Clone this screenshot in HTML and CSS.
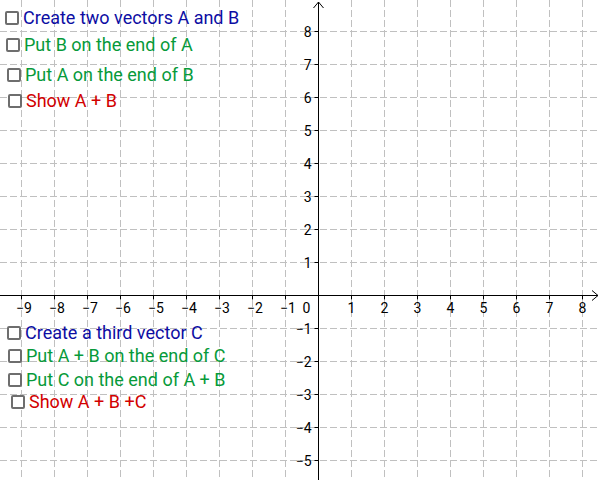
FILE: index.html
```html
<!DOCTYPE html>
<html>
<head>
<meta charset="utf-8">
<link rel="stylesheet" href="styles.css">
</head>
<body>
<div class="applet">
  <svg class="graph" width="600" height="480" viewBox="0 0 600 480">
    <g class="grid">
      <line x1="21.5" y1="0" x2="21.5" y2="480"/>
      <line x1="54.5" y1="0" x2="54.5" y2="480"/>
      <line x1="87.5" y1="0" x2="87.5" y2="480"/>
      <line x1="120.5" y1="0" x2="120.5" y2="480"/>
      <line x1="153.5" y1="0" x2="153.5" y2="480"/>
      <line x1="186.5" y1="0" x2="186.5" y2="480"/>
      <line x1="219.5" y1="0" x2="219.5" y2="480"/>
      <line x1="252.5" y1="0" x2="252.5" y2="480"/>
      <line x1="285.5" y1="0" x2="285.5" y2="480"/>
      <line x1="351.5" y1="0" x2="351.5" y2="480"/>
      <line x1="384.5" y1="0" x2="384.5" y2="480"/>
      <line x1="417.5" y1="0" x2="417.5" y2="480"/>
      <line x1="450.5" y1="0" x2="450.5" y2="480"/>
      <line x1="483.5" y1="0" x2="483.5" y2="480"/>
      <line x1="516.5" y1="0" x2="516.5" y2="480"/>
      <line x1="549.5" y1="0" x2="549.5" y2="480"/>
      <line x1="582.5" y1="0" x2="582.5" y2="480"/>
      <line x1="0" y1="31.5" x2="600" y2="31.5"/>
      <line x1="0" y1="64.5" x2="600" y2="64.5"/>
      <line x1="0" y1="97.5" x2="600" y2="97.5"/>
      <line x1="0" y1="130.5" x2="600" y2="130.5"/>
      <line x1="0" y1="163.5" x2="600" y2="163.5"/>
      <line x1="0" y1="196.5" x2="600" y2="196.5"/>
      <line x1="0" y1="229.5" x2="600" y2="229.5"/>
      <line x1="0" y1="262.5" x2="600" y2="262.5"/>
      <line x1="0" y1="328.5" x2="600" y2="328.5"/>
      <line x1="0" y1="361.5" x2="600" y2="361.5"/>
      <line x1="0" y1="394.5" x2="600" y2="394.5"/>
      <line x1="0" y1="427.5" x2="600" y2="427.5"/>
      <line x1="0" y1="460.5" x2="600" y2="460.5"/>
    </g>
    <g class="axes">
      <line x1="0" y1="295.5" x2="598" y2="295.5"/>
      <polyline class="arrow" points="592,290.5 598,295.5 592,300.5"/>
      <line x1="318.5" y1="2" x2="318.5" y2="480"/>
      <polyline class="arrow" points="313.5,8 318.5,2 323.5,8"/>
    </g>
    <g class="ticks">
      <path d="M21.5 295.5v4M54.5 295.5v4M87.5 295.5v4M120.5 295.5v4M153.5 295.5v4M186.5 295.5v4M219.5 295.5v4M252.5 295.5v4M285.5 295.5v4M351.5 295.5v4M384.5 295.5v4M417.5 295.5v4M450.5 295.5v4M483.5 295.5v4M516.5 295.5v4M549.5 295.5v4M582.5 295.5v4"/>
      <path d="M318.5 31.5h-4M318.5 64.5h-4M318.5 97.5h-4M318.5 130.5h-4M318.5 163.5h-4M318.5 196.5h-4M318.5 229.5h-4M318.5 262.5h-4M318.5 328.5h-4M318.5 361.5h-4M318.5 394.5h-4M318.5 427.5h-4M318.5 460.5h-4"/>
    </g>
    <g class="xlabels">
      <text x="24" y="312.5">−9</text>
      <text x="57" y="312.5">−8</text>
      <text x="90" y="312.5">−7</text>
      <text x="123" y="312.5">−6</text>
      <text x="156" y="312.5">−5</text>
      <text x="189" y="312.5">−4</text>
      <text x="222" y="312.5">−3</text>
      <text x="255" y="312.5">−2</text>
      <text x="288" y="312.5">−1</text>
      <text x="306.5" y="312.5">0</text>
      <text x="351.5" y="312.5">1</text>
      <text x="384.5" y="312.5">2</text>
      <text x="417.5" y="312.5">3</text>
      <text x="450.5" y="312.5">4</text>
      <text x="483.5" y="312.5">5</text>
      <text x="516.5" y="312.5">6</text>
      <text x="549.5" y="312.5">7</text>
      <text x="582.5" y="312.5">8</text>
    </g>
    <g class="ylabels">
      <text x="311.5" y="36.5">8</text>
      <text x="311.5" y="69.5">7</text>
      <text x="311.5" y="102.5">6</text>
      <text x="311.5" y="135.5">5</text>
      <text x="311.5" y="168.5">4</text>
      <text x="311.5" y="201.5">3</text>
      <text x="311.5" y="234.5">2</text>
      <text x="311.5" y="267.5">1</text>
      <text x="311.5" y="333.5">−1</text>
      <text x="311.5" y="366.5">−2</text>
      <text x="311.5" y="399.5">−3</text>
      <text x="311.5" y="432.5">−4</text>
      <text x="311.5" y="465.5">−5</text>
    </g>
  </svg>

  <label class="check blue r1"><span class="box"></span><span>Create two vectors A and B</span></label>
  <label class="check green r2"><span class="box"></span><span>Put B on the end of A</span></label>
  <label class="check green r3"><span class="box"></span><span>Put A on the end of B</span></label>
  <label class="check red r4"><span class="box"></span><span>Show A + B</span></label>
  <label class="check blue r5"><span class="box"></span><span>Create a third vector C</span></label>
  <label class="check green r6"><span class="box"></span><span>Put A + B on the end of C</span></label>
  <label class="check green r7"><span class="box"></span><span>Put C on the end of A + B</span></label>
  <label class="check red r8"><span class="box"></span><span>Show A + B +C</span></label>
</div>
</body>
</html>
```

FILE: styles.css
```css
html, body {
  margin: 0;
  padding: 0;
  background: #ffffff;
}

.applet {
  position: relative;
  width: 600px;
  height: 480px;
  overflow: hidden;
  font-family: Roboto, "Liberation Sans", sans-serif;
}

.graph {
  display: block;
}

.grid line {
  stroke: #c0c0c0;
  stroke-width: 1;
  stroke-dasharray: 7 3;
  fill: none;
}

.axes line,
.ticks path {
  stroke: #000000;
  stroke-width: 1;
  fill: none;
}

.axes .arrow {
  stroke: #000000;
  stroke-width: 1;
  fill: none;
}

.xlabels text,
.ylabels text {
  font-family: Roboto, "Liberation Sans", sans-serif;
  font-size: 14px;
  fill: #000000;
}

.xlabels text {
  text-anchor: middle;
}

.ylabels text {
  text-anchor: end;
}

.check {
  position: absolute;
  display: flex;
  align-items: center;
  gap: 4px;
  height: 20px;
  font-size: 18px;
  line-height: 20px;
  white-space: nowrap;
}

.box {
  box-sizing: border-box;
  width: 14px;
  height: 14px;
  border: 2px solid #6e6e6e;
  border-radius: 2px;
  background: #ffffff;
}

.blue { color: #0d0da3; }
.green { color: #079a3a; }
.red { color: #d20000; }

.r1 { left: 5px; top: 8px; }
.r2 { left: 6px; top: 35px; }
.r3 { left: 7px; top: 65px; }
.r4 { left: 8px; top: 91px; }
.r5 { left: 7px; top: 323px; }
.r6 { left: 8px; top: 346px; }
.r7 { left: 8px; top: 370px; }
.r8 { left: 11px; top: 392px; }
```
